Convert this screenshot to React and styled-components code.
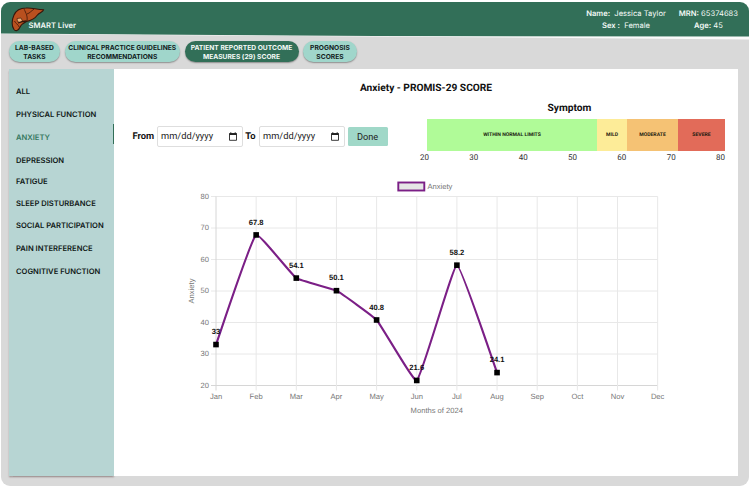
import React, { useState } from "react";
import styled, { createGlobalStyle } from "styled-components";

const GlobalStyle = createGlobalStyle`
  * {
    box-sizing: border-box;
  }

  body {
    margin: 0;
    background: #ffffff;
    font-family: Inter, "Liberation Sans", sans-serif;
    text-rendering: geometricPrecision;
    overflow: hidden;
  }
`;

// Styled Components
const PageContainer = styled.div`
  width: 750px;
  height: 490px;
  padding: 2px 1px 4px;
`;

const Window = styled.div`
  display: flex;
  flex-direction: column;
  height: 484px;
  background-color: #d9d9d9;
  border-radius: 9px;
  overflow: hidden;
`;

const HeaderTrack = styled.div`
  flex: none;
  height: 37.5px;
  background-color: #fafafa;
  clip-path: polygon(0 0, 100% 0, 100% 100%, 50% 34.5px, 0 32px);
`;

const Header = styled.header`
  display: flex;
  justify-content: space-between;
  height: 34.5px;
  padding: 5px 11px 0 10px;
  background-color: #326f58;
  clip-path: polygon(0 0, 100% 0, 100% 100%, 50% 34px, 0 31.5px);
  color: #f4faf7;
`;

const Brand = styled.div`
  display: flex;
`;

const BrandName = styled.span`
  margin: 14px 0 0 -16.5px;
  font-size: 7.6px;
  line-height: 10px;
  font-weight: 600;
`;

const PatientInfo = styled.div`
  display: flex;
  gap: 13px;
`;

const PatientColumn = styled.div`
  display: flex;
  flex-direction: column;
  align-items: center;
  gap: 2px;
  padding-top: 2px;
  font-size: 7.6px;
  line-height: 10px;
  white-space: pre;

  b {
    font-weight: 600;
  }
`;

const TabBar = styled.nav`
  display: flex;
  flex: none;
  gap: 4.5px;
  height: 29.5px;
  padding: 1.5px 8px 0;
`;

const Tab = styled.button`
  width: ${(props) => props.$width}px;
  height: 21px;
  padding: 2px 0 0;
  border: none;
  border-radius: 11px;
  background-color: ${(props) => (props.$active ? "#326f58" : "#a0d6cb")};
  color: ${(props) => (props.$active ? "#f4faf7" : "#10201c")};
  box-shadow: 0 1px 1.5px rgba(0, 0, 0, 0.35);
  font-family: inherit;
  font-size: 6.7px;
  line-height: 8.3px;
  font-weight: 650;
  text-align: center;
  white-space: pre;
  cursor: pointer;
`;

const Body = styled.div`
  display: flex;
  flex: none;
  height: 407px;
  margin: 0 11px 0 8px;
`;

const Sidebar = styled.aside`
  flex: none;
  width: 105px;
  padding-top: 11px;
  background-color: #b7d5d3;
  box-shadow: 0 1.5px 1.5px rgba(90, 60, 60, 0.4);
`;

const SidebarItem = styled.div`
  display: flex;
  align-items: center;
  height: ${(props) => props.$height}px;
  padding-left: 7px;
  color: ${(props) => (props.$active ? "#35785f" : "#101816")};
  font-size: 7.6px;
  font-weight: 600;
  white-space: nowrap;
  cursor: pointer;

  &::after {
    content: "";
    width: 1.5px;
    height: 20px;
    margin: 0 0 7px auto;
    background-color: ${(props) => (props.$active ? "#326f58" : "transparent")};
  }
`;

const Content = styled.main`
  flex: 1;
  background-color: #ffffff;
  font-family: Roboto, "Liberation Sans", sans-serif;
`;

const Title = styled.h1`
  margin: 0;
  padding: 12.5px 0 0;
  color: #111111;
  font-size: 10.2px;
  line-height: 14px;
  font-weight: 700;
  text-align: center;
`;

const Controls = styled.div`
  display: flex;
  justify-content: space-between;
  height: 69.5px;
  padding: 6px 13px 0 18.5px;
`;

const FilterForm = styled.div`
  display: flex;
  align-items: center;
  height: 21px;
  margin-top: 24.5px;
`;

const FilterLabel = styled.label`
  width: ${(props) => props.$width}px;
  color: #111111;
  font-size: 9.4px;
  font-weight: 700;
`;

const DateField = styled.div`
  display: flex;
  align-items: center;
  justify-content: space-between;
  width: 86px;
  height: 21px;
  padding: 0 5.5px 0 3px;
  border: 1px solid #dedede;
  border-radius: 2px;
  color: #222222;
  font-size: 9.3px;
`;

const DoneButton = styled.button`
  width: 40px;
  height: 19px;
  margin-left: 2.5px;
  padding: 0;
  border: none;
  border-radius: 1.5px;
  background-color: #a0d8c8;
  color: #222222;
  font-family: inherit;
  font-size: 9.2px;
  cursor: pointer;
`;

const Scale = styled.div`
  width: 307px;
`;

const ScaleTitle = styled.h2`
  margin: 0;
  padding: 1px 4px 0 0;
  color: #111111;
  font-size: 10.2px;
  line-height: 12px;
  font-weight: 700;
  text-align: center;
`;

const ScaleBar = styled.div`
  display: flex;
  height: 32px;
  margin: 4.5px 0 0 9px;
`;

const ScaleBand = styled.div`
  display: flex;
  align-items: center;
  justify-content: center;
  width: ${(props) => props.$width}px;
  background-color: ${(props) => props.$color};
  color: #1c1a10;
  font-size: 5.1px;
  font-weight: 700;
`;

const ScaleTicks = styled.div`
  display: flex;
  justify-content: space-between;
  width: 307px;
  padding-left: 2px;
  color: #333333;
  font-size: 8px;
  line-height: 13px;
`;

const ChartWrapper = styled.div`
  height: 260px;
  margin-top: 10px;

  svg {
    display: block;
  }
`;

const AxisText = styled.text`
  fill: #777777;
  font-family: "Liberation Sans", Arial, sans-serif;
  font-size: 7.6px;
`;

const PointLabel = styled(AxisText)`
  fill: #111111;
  font-weight: 700;
`;

const tabs = [
  { text: "LAB-BASED\nTASKS", width: 51 },
  { text: "CLINICAL PRACTICE GUIDELINES\nRECOMMENDATIONS", width: 115.5 },
  { text: "PATIENT REPORTED OUTCOME\nMEASURES (29) SCORE", width: 114 },
  { text: "PROGNOSIS\nSCORES", width: 54 },
];

const domains = [
  { name: "ALL", height: 23 },
  { name: "PHYSICAL FUNCTION", height: 23 },
  { name: "ANXIETY", height: 23 },
  { name: "DEPRESSION", height: 22 },
  { name: "FATIGUE", height: 21.5 },
  { name: "SLEEP DISTURBANCE", height: 22 },
  { name: "SOCIAL PARTICIPATION", height: 22 },
  { name: "PAIN INTERFERENCE", height: 23.5 },
  { name: "COGNITIVE FUNCTION", height: 23 },
];

const bands = [
  { name: "WITHIN NORMAL LIMITS", width: 170, color: "#b0fb98" },
  { name: "MILD", width: 30, color: "#fdec98" },
  { name: "MODERATE", width: 51, color: "#f5c274" },
  { name: "SEVERE", width: 47, color: "#e26b59" },
];

const months = ["Jan", "Feb", "Mar", "Apr", "May", "Jun", "Jul", "Aug", "Sep", "Oct", "Nov", "Dec"];
const scores = [33, 67.8, 54.1, 50.1, 40.8, 21.6, 58.2, 24.1];
const levels = [20, 30, 40, 50, 60, 70, 80];

const LEFT = 102;
const TOP = 21.5;
const STEP = 40.15;
const BOTTOM = TOP + 189;
const RIGHT = LEFT + STEP * 11;

const xAt = (i) => LEFT + i * STEP;
const yAt = (value) => BOTTOM - (value - 20) * 3.15;

// bezier path through the points, control points scaled by the tension
const buildLine = (values, tension) => {
  const pts = values.map((v, i) => ({ x: xAt(i), y: yAt(v) }));
  const controls = pts.map((p, i) => {
    const prev = pts[i - 1] || p;
    const next = pts[i + 1] || p;
    const d0 = Math.hypot(p.x - prev.x, p.y - prev.y);
    const d1 = Math.hypot(next.x - p.x, next.y - p.y);
    const a = (tension * d0) / (d0 + d1);
    const b = (tension * d1) / (d0 + d1);
    return {
      before: { x: p.x - a * (next.x - prev.x), y: p.y - a * (next.y - prev.y) },
      after: { x: p.x + b * (next.x - prev.x), y: p.y + b * (next.y - prev.y) },
    };
  });
  return pts
    .map((p, i) => {
      if (i === 0) return `M${p.x} ${p.y}`;
      const c1 = controls[i - 1].after;
      const c2 = controls[i].before;
      return `C${c1.x} ${c1.y} ${c2.x} ${c2.y} ${p.x} ${p.y}`;
    })
    .join(" ");
};

const LiverLogo = () => (
  <svg width="34" height="26" viewBox="0 0 34 26">
    <path
      d="M3 8C5 3.500 10 1 15 1C20 .5 24 2 32.500 2.800C32 5 28.500 5.500 26 8.500C23.500 12 20 13.500 15.500 14.500C12 16 10 18 8.500 21C7.500 23.500 4.500 24.500 3 22.500C.8 19 .8 13 3 8Z"
      fill="#b9501f"
      stroke="#35160b"
      strokeWidth="1.100"
    />
    <path d="M13 1.500C13.500 4 17 8 16 14M16 7C19 6 20 4 23 2.200M3.500 14C4 16 7 17 8.500 20.500" fill="none" stroke="#4a1d0c" strokeWidth=".9" />
    <path d="M6 11.500L10 11L11.500 14L9 15.500L6.500 14.500Z" fill="#e8b078" stroke="#4a1d0c" strokeWidth=".7" />
    <path d="M7 16L12 14.500L15.500 14" fill="none" stroke="#35160b" strokeWidth="1.300" />
  </svg>
);

const CalendarIcon = () => (
  <svg width="8" height="9" viewBox="0 0 8 9">
    <path d="M.5 1.500H7.500V8.300H.5Z" fill="none" stroke="#222222" strokeWidth=".9" />
    <path d="M.5 1.300H7.500V3H.5ZM1.300 .3H2.300V1.300H1.300ZM5.700 .3H6.700V1.300H5.700Z" fill="#222222" />
  </svg>
);

const ScoreChart = () => (
  <ChartWrapper>
    <svg width="624" height="260" viewBox="0 0 624 260">
      <rect x="284.300" y="7.500" width="26" height="8" fill="#e6e6e6" stroke="#7b1f86" strokeWidth="1.900" />
      <AxisText x="313.500" y="13.700">Anxiety</AxisText>

      {levels.map((level) => (
        <g key={level}>
          <line x1={LEFT - 5} x2={RIGHT} y1={yAt(level)} y2={yAt(level)} stroke={level === 20 ? "#d6d6d6" : "#e8e8e8"} />
          <AxisText x={LEFT - 7} y={yAt(level) + 2.4} textAnchor="end">
            {level}
          </AxisText>
        </g>
      ))}
      {months.map((month, i) => (
        <g key={month}>
          <line x1={xAt(i)} x2={xAt(i)} y1={TOP} y2={BOTTOM + 5} stroke={i === 0 ? "#d6d6d6" : "#e8e8e8"} />
          <AxisText x={xAt(i)} y={BOTTOM + 13.5} textAnchor="middle">
            {month}
          </AxisText>
        </g>
      ))}

      <AxisText x="322.800" y={BOTTOM + 27.2} textAnchor="middle">
        Months of 2024
      </AxisText>
      <AxisText transform="translate(80 116) rotate(-90)" textAnchor="middle">
        Anxiety
      </AxisText>

      <path d={buildLine(scores, 0.1)} fill="none" stroke="#7b1f86" strokeWidth="2.100" />
      {scores.map((score, i) => (
        <g key={months[i]}>
          <rect x={xAt(i) - 2.8} y={yAt(score) - 2.8} width="5.600" height="5.600" fill="#000000" />
          <PointLabel x={xAt(i)} y={yAt(score) - 10.4} textAnchor="middle">
            {score}
          </PointLabel>
        </g>
      ))}
    </svg>
  </ChartWrapper>
);

const App = () => {
  const [activeTab, setActiveTab] = useState(2);
  const [activeDomain, setActiveDomain] = useState("ANXIETY");

  return (
    <PageContainer>
      <GlobalStyle />
      <Window>
        <HeaderTrack>
          <Header>
            <Brand>
              <LiverLogo />
              <BrandName>SMART Liver</BrandName>
            </Brand>
            <PatientInfo>
              <PatientColumn>
                <span><b>Name:</b>{"  Jessica Taylor"}</span>
                <span><b>Sex :</b>{"  Female"}</span>
              </PatientColumn>
              <PatientColumn>
                <span><b>MRN:</b> 65374683</span>
                <span><b>Age:</b> 45</span>
              </PatientColumn>
            </PatientInfo>
          </Header>
        </HeaderTrack>

        <TabBar>
          {tabs.map((tab, i) => (
            <Tab key={tab.text} $width={tab.width} $active={i === activeTab} onClick={() => setActiveTab(i)}>
              {tab.text}
            </Tab>
          ))}
        </TabBar>

        <Body>
          <Sidebar>
            {domains.map((domain) => (
              <SidebarItem
                key={domain.name}
                $height={domain.height}
                $active={domain.name === activeDomain}
                onClick={() => setActiveDomain(domain.name)}
              >
                {domain.name}
              </SidebarItem>
            ))}
          </Sidebar>

          <Content>
            <Title>Anxiety - PROMIS-29 SCORE</Title>
            <Controls>
              <FilterForm>
                <FilterLabel $width={24.5}>From</FilterLabel>
                <DateField>
                  mm/dd/yyyy
                  <CalendarIcon />
                </DateField>
                <FilterLabel $width={16}>&nbsp;To</FilterLabel>
                <DateField>
                  mm/dd/yyyy
                  <CalendarIcon />
                </DateField>
                <DoneButton>Done</DoneButton>
              </FilterForm>
              <Scale>
                <ScaleTitle>Symptom</ScaleTitle>
                <ScaleBar>
                  {bands.map((band) => (
                    <ScaleBand key={band.name} $width={band.width} $color={band.color}>
                      {band.name}
                    </ScaleBand>
                  ))}
                </ScaleBar>
                <ScaleTicks>
                  {["20", "30", "40", "50", "60", "70", "80"].map((tick) => (
                    <span key={tick}>{tick}</span>
                  ))}
                </ScaleTicks>
              </Scale>
            </Controls>
            <ScoreChart />
          </Content>
        </Body>
      </Window>
    </PageContainer>
  );
};

export default App;
